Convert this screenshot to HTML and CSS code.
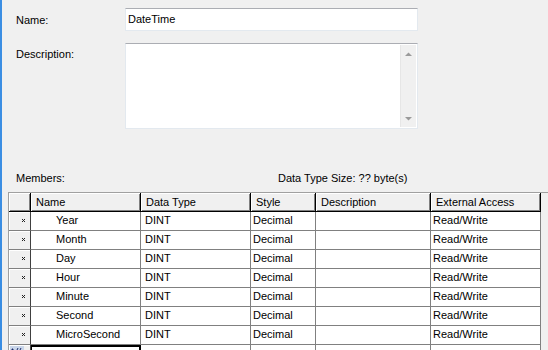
FILE: index.html
```html
<!DOCTYPE html>
<html>
<head>
<meta charset="utf-8">
<link rel="stylesheet" href="styles.css">
</head>
<body>
<div class="strip"></div>
<div class="main">
  <div class="form-row">
    <div class="label">Name:</div>
    <div class="textbox">DateTime</div>
  </div>
  <div class="form-row desc-row">
    <div class="label desc-label">Description:</div>
    <div class="textarea">
      <div class="ta-content"></div>
      <div class="vscroll">
        <svg width="15" height="80" viewBox="0 0 15 80">
          <path d="M4 11 L7.5 7.5 L11 11 Z" fill="#9a9a9a"/>
          <path d="M4 72 L7.5 75.5 L11 72 Z" fill="#9a9a9a"/>
        </svg>
      </div>
    </div>
  </div>
  <div class="members-row">
    <span class="members">Members:</span>
    <span>Data Type Size: ?? byte(s)</span>
  </div>
  <div class="grid-wrap">
    <div class="grid">
      <div class="hc corner"></div>
      <div class="hc">Name</div>
      <div class="hc">Data Type</div>
      <div class="hc">Style</div>
      <div class="hc">Description</div>
      <div class="hc">External Access</div>

      <div class="rh"><svg class="x" width="3" height="3" viewBox="0 0 3 3"><path d="M0 0h1v1H0zM2 0h1v1H2zM1 1h1v1H1zM0 2h1v1H0zM2 2h1v1H2z" fill="#222"/></svg></div><div class="c nm">Year</div><div class="c dt">DINT</div><div class="c">Decimal</div><div class="c"></div><div class="c">Read/Write</div>
      <div class="rh"><svg class="x" width="3" height="3" viewBox="0 0 3 3"><path d="M0 0h1v1H0zM2 0h1v1H2zM1 1h1v1H1zM0 2h1v1H0zM2 2h1v1H2z" fill="#222"/></svg></div><div class="c nm">Month</div><div class="c dt">DINT</div><div class="c">Decimal</div><div class="c"></div><div class="c">Read/Write</div>
      <div class="rh"><svg class="x" width="3" height="3" viewBox="0 0 3 3"><path d="M0 0h1v1H0zM2 0h1v1H2zM1 1h1v1H1zM0 2h1v1H0zM2 2h1v1H2z" fill="#222"/></svg></div><div class="c nm">Day</div><div class="c dt">DINT</div><div class="c">Decimal</div><div class="c"></div><div class="c">Read/Write</div>
      <div class="rh"><svg class="x" width="3" height="3" viewBox="0 0 3 3"><path d="M0 0h1v1H0zM2 0h1v1H2zM1 1h1v1H1zM0 2h1v1H0zM2 2h1v1H2z" fill="#222"/></svg></div><div class="c nm">Hour</div><div class="c dt">DINT</div><div class="c">Decimal</div><div class="c"></div><div class="c">Read/Write</div>
      <div class="rh"><svg class="x" width="3" height="3" viewBox="0 0 3 3"><path d="M0 0h1v1H0zM2 0h1v1H2zM1 1h1v1H1zM0 2h1v1H0zM2 2h1v1H2z" fill="#222"/></svg></div><div class="c nm">Minute</div><div class="c dt">DINT</div><div class="c">Decimal</div><div class="c"></div><div class="c">Read/Write</div>
      <div class="rh"><svg class="x" width="3" height="3" viewBox="0 0 3 3"><path d="M0 0h1v1H0zM2 0h1v1H2zM1 1h1v1H1zM0 2h1v1H0zM2 2h1v1H2z" fill="#222"/></svg></div><div class="c nm">Second</div><div class="c dt">DINT</div><div class="c">Decimal</div><div class="c"></div><div class="c">Read/Write</div>
      <div class="rh"><svg class="x" width="3" height="3" viewBox="0 0 3 3"><path d="M0 0h1v1H0zM2 0h1v1H2zM1 1h1v1H1zM0 2h1v1H0zM2 2h1v1H2z" fill="#222"/></svg></div><div class="c nm">MicroSecond</div><div class="c dt">DINT</div><div class="c">Decimal</div><div class="c"></div><div class="c">Read/Write</div>

      <div class="rh newrow">
        <svg width="14" height="8" viewBox="0 0 14 8">
          <rect x="0" y="0" width="14" height="8" fill="#c9d6ea"/>
          <path d="M1 4 h3 M2.5 2.5 v3 M6 6 L8 2 M9 6 L11 2 M10 5 h3" stroke="#1a2a6a" stroke-width="1" fill="none"/>
        </svg>
      </div>
      <div class="c focus"></div><div class="c"></div><div class="c"></div><div class="c"></div><div class="c"></div>
    </div>
  </div>
</div>
</body>
</html>
```

FILE: styles.css
```css
* { box-sizing: border-box; }
html, body {
  margin: 0;
  padding: 0;
  width: 548px;
  height: 350px;
  overflow: hidden;
}
body {
  display: flex;
  background: #f0f0f0;
  font-family: "Liberation Sans", Arial, sans-serif;
  font-size: 11px;
  color: #000;
}
.strip {
  width: 2px;
  flex: none;
  background: #3b8ee3;
}
.main {
  flex: 1;
  padding-top: 8px;
  display: flex;
  flex-direction: column;
}
.form-row {
  display: flex;
  align-items: center;
  padding-left: 14px;
}
.label {
  width: 109px;
  flex: none;
}
.textbox {
  width: 293px;
  height: 23px;
  background: #fff;
  border: 1px solid #e3e9ef;
  border-top-color: #abadb3;
  padding-left: 2px;
  line-height: 21px;
}
.desc-row {
  margin-top: 12px;
  align-items: flex-start;
}
.desc-label {
  padding-top: 5px;
}
.textarea {
  width: 293px;
  height: 86px;
  background: #fff;
  border: 1px solid #e3e9ef;
  border-top-color: #abadb3;
  padding: 1px;
  display: flex;
}
.ta-content { flex: 1; }
.vscroll {
  width: 16px;
  background: #f0f0f0;
  border-left: 1px solid #e6e6e6;
  display: flex;
  justify-content: center;
}
.members-row {
  margin-top: 43px;
  padding-left: 14px;
  height: 13px;
  line-height: 13px;
  display: flex;
}
.members {
  width: 262px;
  flex: none;
}
.grid-wrap {
  margin-top: 7px;
  margin-left: 6px;
  border-top: 1px solid #a0a0a0;
  border-left: 1px solid #a0a0a0;
  flex: 1;
}
.grid {
  display: grid;
  grid-template-columns: 22px 110px 110px 65px 115px 110px;
  grid-template-rows: repeat(9, 19px);
  width: 532px;
}
.hc {
  background: #f0f0f0;
  border-right: 1px solid #000;
  border-bottom: 1px solid #000;
  box-shadow: inset 1px 1px 0 #fff, inset -1px -1px 0 #808080;
  padding-left: 5px;
  line-height: 18px;
  white-space: nowrap;
}
.hc.corner { padding: 0; }
.rh {
  background: #f0f0f0;
  border-right: 1px solid #404040;
  border-bottom: 1px solid #808080;
  box-shadow: inset 1px 1px 0 #fff;
  display: flex;
  justify-content: flex-end;
  align-items: flex-start;
  padding: 7px 5px 0 0;
}
.x { display: block; }
.c {
  background: #fff;
  border-right: 1px solid #808080;
  border-bottom: 1px solid #808080;
  padding-left: 2px;
  line-height: 17px;
  white-space: nowrap;
}
.c.nm { padding-left: 25px; }
.c.dt { padding-left: 4px; }
.rh.newrow {
  padding: 1px 0 0 1px;
  justify-content: flex-start;
}
.newrow svg { display: block; }
.c.focus {
  border: 2px solid #000;
  border-left-width: 1px;
}
```
